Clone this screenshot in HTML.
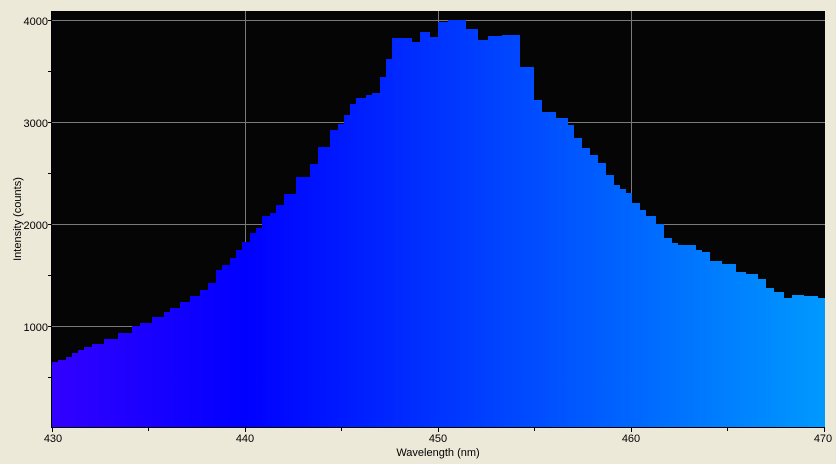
<!DOCTYPE html>
<html><head><style>body{margin:0;background:#ECE9D8;}svg{display:block}</style></head><body>
<svg width="836" height="464" xmlns="http://www.w3.org/2000/svg" font-family="Liberation Sans, sans-serif" font-size="11">
<defs><linearGradient id="g" x1="52" x2="825" y1="0" y2="0" gradientUnits="userSpaceOnUse">
<stop offset="0" stop-color="#3300FF"/><stop offset="0.25" stop-color="#0000FF"/><stop offset="0.5" stop-color="#0033FF"/><stop offset="0.75" stop-color="#0066FF"/><stop offset="1" stop-color="#0099FF"/></linearGradient></defs>
<rect width="836" height="464" fill="#ECE9D8"/>
<rect x="52" y="11" width="773" height="416" fill="#050505"/>
<g stroke="#7a7a7a" stroke-width="1">
<line x1="52" x2="825" y1="20.5" y2="20.5"/><line x1="52" x2="825" y1="122.5" y2="122.5"/><line x1="52" x2="825" y1="224.5" y2="224.5"/><line x1="52" x2="825" y1="326.5" y2="326.5"/>
<line x1="245.5" x2="245.5" y1="11" y2="427"/><line x1="438.5" x2="438.5" y1="11" y2="427"/><line x1="631.5" x2="631.5" y1="11" y2="427"/>
</g>
<path fill="url(#g)" d="M52 427 V362 H58 V360 H66 V357 H72 V353 H78 V350 H84 V347 H92 V344 H104 V339 H118 V333 H132 V326 H140 V323 H152 V317 H164 V312 H170 V308 H180 V302 H190 V296 H200 V290 H208 V283 H216 V270 H222 V265 H230 V258 H236 V250 H242 V242 H250 V233 H256 V228 H262 V216 H270 V213 H276 V205 H284 V194 H296 V177 H310 V164 H318 V147 H330 V130 H338 V124 H344 V115 H350 V104 H356 V98 H366 V95 H372 V93 H380 V77 H386 V59 H392 V38 H412 V42 H420 V32 H430 V37 H438 V22 H448 V20 H466 V29 H478 V40 H488 V36 H502 V35 H520 V67 H534 V100 H542 V112 H556 V118 H568 V125 H574 V138 H582 V148 H590 V155 H598 V163 H606 V175 H614 V185 H620 V189 H626 V193 H632 V203 H640 V210 H646 V216 H656 V224 H664 V238 H672 V243 H678 V245 H696 V250 H702 V252 H710 V261 H722 V264 H736 V272 H746 V274 H758 V279 H766 V288 H774 V292 H784 V298 H792 V295 H804 V296 H818 V298 H825 V427 Z"/>
<g stroke="#000" stroke-width="1">
<line x1="52" x2="825" y1="427.5" y2="427.5"/>
<line x1="51.5" x2="51.5" y1="11" y2="428"/>
<line x1="48" x2="52" y1="20.5" y2="20.5"/><line x1="48" x2="52" y1="71.5" y2="71.5"/><line x1="48" x2="52" y1="122.5" y2="122.5"/><line x1="48" x2="52" y1="173.5" y2="173.5"/><line x1="48" x2="52" y1="224.5" y2="224.5"/><line x1="48" x2="52" y1="275.5" y2="275.5"/><line x1="48" x2="52" y1="326.5" y2="326.5"/><line x1="48" x2="52" y1="377.5" y2="377.5"/>
<line x1="52.5" x2="52.5" y1="427" y2="432"/><line x1="148.5" x2="148.5" y1="427" y2="431"/><line x1="245.5" x2="245.5" y1="427" y2="432"/><line x1="341.5" x2="341.5" y1="427" y2="431"/><line x1="438.5" x2="438.5" y1="427" y2="432"/><line x1="534.5" x2="534.5" y1="427" y2="431"/><line x1="631.5" x2="631.5" y1="427" y2="432"/><line x1="727.5" x2="727.5" y1="427" y2="431"/><line x1="824.5" x2="824.5" y1="427" y2="432"/>
</g>
<g fill="#000" text-anchor="end">
<text x="48" y="25">4000</text><text x="48" y="127">3000</text><text x="48" y="229">2000</text><text x="48" y="331">1000</text>
</g>
<g fill="#000" text-anchor="middle">
<text x="53" y="442">430</text><text x="245" y="442">440</text><text x="438" y="442">450</text><text x="631" y="442">460</text><text x="823" y="442">470</text>
<text x="438" y="456">Wavelength (nm)</text>
<text transform="translate(21,219) rotate(-90)">Intensity (counts)</text>
</g>
</svg>
</body></html>
